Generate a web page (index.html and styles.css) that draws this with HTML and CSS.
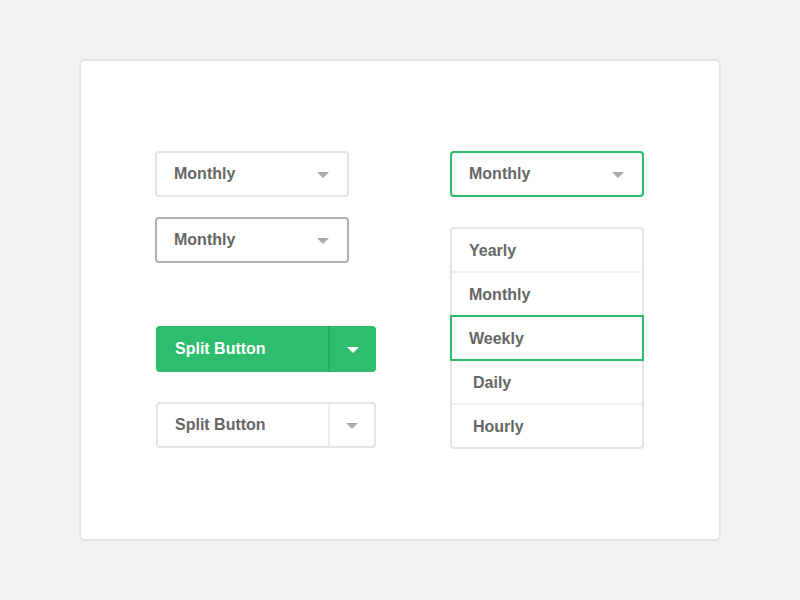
FILE: index.html
```html
<!DOCTYPE html>
<html>
<head>
<meta charset="utf-8">
<link rel="stylesheet" href="styles.css">
</head>
<body>
<div class="card">
  <div class="col col-left">
    <div class="select">Monthly<span class="caret"></span></div>
    <div class="select select-hover">Monthly<span class="caret"></span></div>
    <div class="split split-green">
      <span class="split-main">Split Button</span>
      <span class="split-toggle"><span class="caret caret-white"></span></span>
    </div>
    <div class="split split-plain">
      <span class="split-main">Split Button</span>
      <span class="split-toggle"><span class="caret"></span></span>
    </div>
  </div>
  <div class="col col-right">
    <div class="select select-active">Monthly<span class="caret"></span></div>
    <ul class="menu">
      <li class="item">Yearly</li>
      <li class="item">Monthly</li>
      <li class="item item-selected">Weekly</li>
      <li class="item item-indent">Daily</li>
      <li class="item item-indent">Hourly</li>
    </ul>
  </div>
</div>
</body>
</html>
```
FILE: styles.css
```css
* { box-sizing: border-box; }
html, body { margin: 0; padding: 0; }
body {
  background: #f1f1f1;
  font-family: "Liberation Sans", Arial, sans-serif;
  font-weight: bold;
  font-size: 16px;
  color: #666;
  width: 800px;
  height: 600px;
  padding-top: 59px;
}
.card {
  margin: 0 auto;
  width: 642px;
  height: 482px;
  background: #fff;
  border: 2px solid #e4e4e4;
  border-radius: 5px;
  display: flex;
  padding: 90px 0 0 74px;
}
.col { display: flex; flex-direction: column; }
.col-left { width: 295px; }
.col-right { width: 194px; }

.select {
  width: 194px;
  height: 46px;
  border: 2px solid #e4e4e4;
  border-radius: 4px;
  display: flex;
  align-items: center;
  justify-content: space-between;
  padding: 0 18px 0 17px;
}
.select + .select { margin-top: 20px; }
.select-hover { border-color: #b2b2b2; }
.select-active { border-color: #2dbb6b; }

.caret {
  width: 0;
  height: 0;
  border-left: 6px solid transparent;
  border-right: 6px solid transparent;
  border-top: 6px solid #aaaaaa;
  margin-top: 2px;
}
.caret-white { border-top-color: #fff; }

.split {
  width: 220px;
  height: 46px;
  margin-left: 1px;
  border-radius: 4px;
  display: flex;
}
.split-green {
  margin-top: 63px;
  background: #2dbd6c;
  color: #fff;
}
.split-plain {
  margin-top: 30px;
  border: 2px solid #e4e4e4;
}
.split-main {
  flex: 1;
  display: flex;
  align-items: center;
  padding-left: 19px;
}
.split-plain .split-main { padding-left: 17px; }
.split-toggle {
  width: 48px;
  display: flex;
  align-items: center;
  justify-content: center;
  border-left: 2px solid #28a95f;
}
.split-plain .split-toggle {
  width: 46px;
  border-left-color: #ececec;
}

.menu {
  list-style: none;
  margin: 30px 0 0 0;
  padding: 0;
  width: 194px;
  border: 2px solid #e4e4e4;
  border-radius: 4px;
}
.item {
  height: 42px;
  display: flex;
  align-items: center;
  padding-left: 17px;
  padding-top: 1px;
}
.item + .item { border-top: 2px solid #f0f0f0; height: 44px; }
.item-selected + .item { border-top: none; height: 42px; }
.item.item-selected {
  margin: 0 -2px;
  height: 46px;
  border: 2px solid #2dbb6b;
  padding-left: 17px;
}
.item-indent { padding-left: 21px; }
```
